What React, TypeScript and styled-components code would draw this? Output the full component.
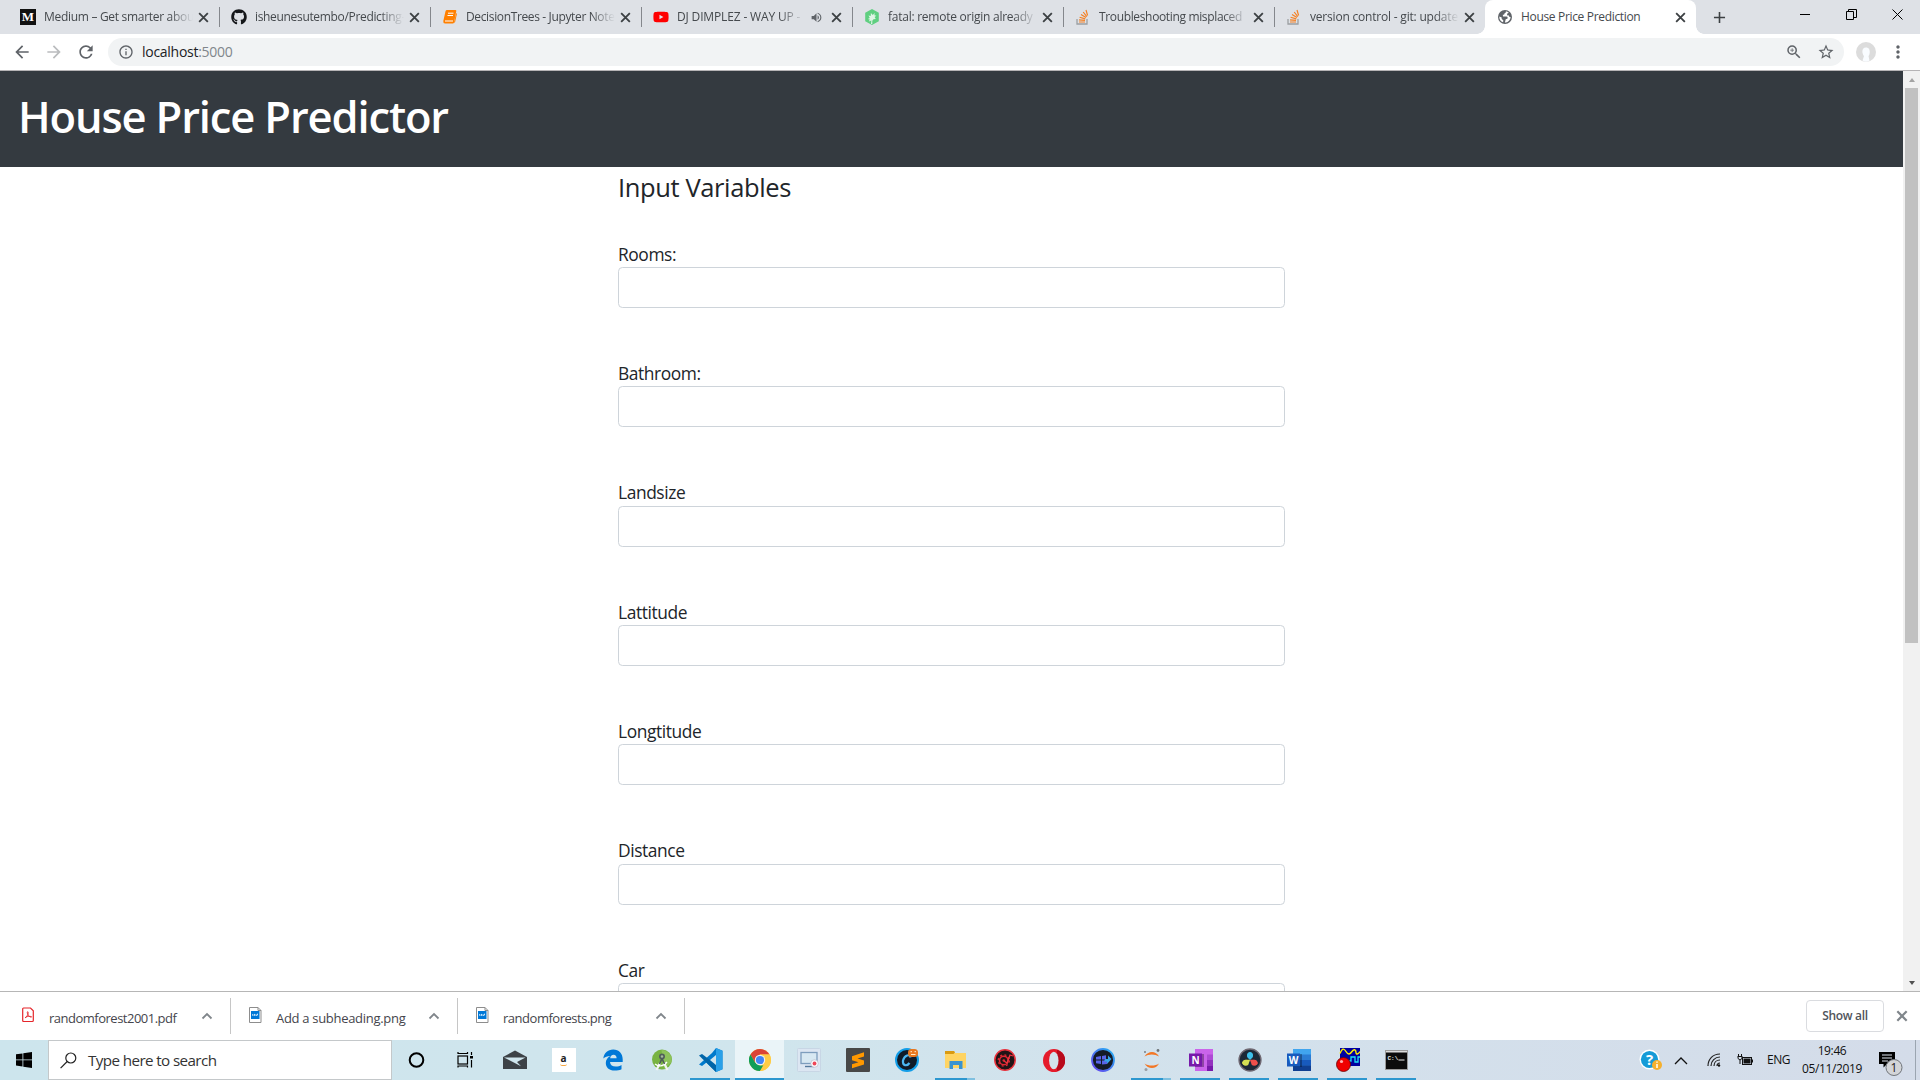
import React from "react";
import styled, { createGlobalStyle, css } from "styled-components";
import { FaGithub, FaYoutube } from "react-icons/fa";
import {
  MdArrowBack, MdArrowForward, MdRefresh, MdAdd, MdVolumeUp, MdInfoOutline,
  MdZoomIn, MdStarBorder, MdMoreVert,
} from "react-icons/md";

const Global = createGlobalStyle`
  * { box-sizing: border-box; }
  html, body { margin: 0; width: 1920px; height: 1080px; overflow: hidden; background: #fff; }
  body { font-family: "Open Sans", "Noto Sans", sans-serif; }
  svg { display: block; flex: none; }
`;

const Screen = styled.div`
  width: 1920px; height: 1080px; display: flex; flex-direction: column; overflow: hidden;
`;

/* tab strip */
const TabStrip = styled.div`
  height: 34px; flex: none; display: flex; background: #dee1e6; padding-left: 8px;
`;
const TabBox = styled.div<{ $active?: boolean; $sep?: boolean }>`
  width: 211px; height: 34px; flex: none; display: flex; align-items: center; padding: 0 9px 0 12px; position: relative;
  ${(p) => p.$active && css`
    background: #fff; border-radius: 8px 8px 0 0;
    &::before, &::after { content: ""; position: absolute; bottom: 0; width: 8px; height: 8px; }
    &::before { left: -8px; background: radial-gradient(circle at 0 0, transparent 7.5px, #fff 8px); }
    &::after { right: -8px; background: radial-gradient(circle at 100% 0, transparent 7.5px, #fff 8px); }
  `}
  ${(p) => p.$sep && css`
    &::after { content: ""; position: absolute; right: -1px; top: 7px; width: 1px; height: 20px; background: #84878c; }
  `}
`;
const Favicon = styled.span`
  width: 16px; height: 16px; flex: none; display: flex; align-items: center; justify-content: center;
`;
const TabTitle = styled.span<{ $w?: number; $ls: number; $fade?: boolean }>`
  margin-left: 8px; width: ${(p) => p.$w || 148}px; flex: none; overflow: hidden; white-space: nowrap;
  font-size: 12px; line-height: 18px; color: #45494d; letter-spacing: ${(p) => p.$ls}px;
  ${(p) => p.$fade && css`mask-image: linear-gradient(90deg, #000 calc(100% - 24px), transparent);`}
`;
const AudioMark = styled.span`
  margin-left: 6px; display: flex; color: #5f6368;
`;
const TabClose = styled.span`
  margin-left: auto; width: 13px; display: flex;
`;
const NewTab = styled.div`
  width: 46px; display: flex; align-items: center; justify-content: center; color: #3c4043;
`;
const WindowButtons = styled.div`
  margin-left: auto; display: flex; height: 28px;
`;
const WinButton = styled.div`
  width: 46px; display: flex; align-items: center; justify-content: center;
`;

/* toolbar */
const Toolbar = styled.div`
  height: 37px; flex: none; display: flex; align-items: center; background: #fff; border-bottom: 1px solid #b6b4b6;
  padding-left: 12px; color: #5f6368;
`;
const NavButton = styled.span<{ $dim?: boolean }>`
  width: 32px; display: flex; color: ${(p) => (p.$dim ? "#babcbe" : "#5f6368")};
`;
const Omnibox = styled.div`
  width: 1736px; height: 28px; border-radius: 14px; background: #f1f3f4; display: flex; align-items: center; padding: 0 9px 0 10px;
`;
const Url = styled.span`
  margin: -1px 0 0 8px; font-size: 14px; color: #202124; letter-spacing: -0.28px; span { color: #80868b; }
`;
const OmniIcons = styled.span`
  margin-left: auto; display: flex; gap: 14px;
`;
const Avatar = styled.span`
  margin-left: 12px; display: flex;
`;
const Menu = styled.span`
  margin-left: 12px; display: flex;
`;

/* page */
const Viewport = styled.div`
  height: 920px; flex: none; display: flex; overflow: hidden;
`;
const Page = styled.main`
  width: 1903px; height: 920px; overflow: hidden; background: #fff;
`;
const Header = styled.header`
  height: 96px; background: #343a40; padding: 16px 18px 0;
`;
const Title = styled.h1`
  margin: 0; color: #fff; font-size: 43.5px; line-height: 60px; font-weight: 600; white-space: nowrap; letter-spacing: -1.14px;
`;
const Form = styled.form`
  width: 667px; margin-left: 618px; color: #212529;
`;
const Legend = styled.h2`
  margin: 0; font-size: 25.5px; line-height: 32px; padding-top: 4px; height: 73.7px; font-weight: 400; white-space: nowrap; letter-spacing: -0.38px;
`;
const Field = styled.div`
  height: 119.33px;
`;
const Label = styled.label`
  display: block; height: 26.3px; line-height: 26.7px; font-size: 17.4px; white-space: nowrap; letter-spacing: -0.42px;
`;
const Input = styled.input`
  display: block; width: 667px; height: 41px; border: 1px solid #ced4da; border-radius: 4.4px; background: #fff; outline: none;
`;
const Scrollbar = styled.div`
  width: 17px; height: 920px; background: #f1f1f1; display: flex; flex-direction: column; align-items: center;
`;
const Arrow = styled.div<{ $down?: boolean }>`
  height: 17px; display: flex; align-items: center;
  &::before {
    content: ""; border: 4px solid transparent; border-width: 0 3.5px 4px; border-bottom-color: #a3a3a3;
    ${(p) => p.$down && css`border-width: 4px 3.5px 0; border-top-color: #505050;`}
  }
`;
const Thumb = styled.div`
  width: 13px; height: 555px; margin-bottom: auto; background: #c1c1c1;
`;

/* download shelf */
const Shelf = styled.div`
  height: 49px; flex: none; display: flex; align-items: center; background: #fff; border-top: 1px solid #b6b6b6; padding-right: 11px;
`;
const Download = styled.div<{ $w: number; $pad: number }>`
  width: ${(p) => p.$w}px; height: 36px; display: flex; align-items: flex-start; padding-left: ${(p) => p.$pad}px; padding-right: 17px;
  border-right: 1px solid #c6c6c6;
  > svg:first-child { margin-top: 9px; }
  > svg:last-child { margin: 14px 0 0 auto; }
`;
const FileName = styled.span<{ $ls: number; $gap: number }>`
  margin: 10px 0 0 ${(p) => p.$gap}px; font-size: 13px; line-height: 20px; color: #45454c; letter-spacing: ${(p) => p.$ls}px; white-space: nowrap;
`;
const ShowAll = styled.button`
  margin: 0 11px 0 auto; width: 78px; height: 32px; border: 1px solid #dadce0; border-radius: 4px; background: #fff; padding: 0 0 2px;
  font: 600 12px "Open Sans", sans-serif; color: #50545a; letter-spacing: -0.3px;
`;

/* taskbar */
const Taskbar = styled.div`
  height: 40px; flex: none; display: flex; background: linear-gradient(90deg, #cde5ed 0, #d0e5ed 40%, #d3e1ec 65%, #d4dce9 100%);
`;
const Start = styled.div`
  width: 48px; display: flex; align-items: center; justify-content: center;
`;
const Search = styled.div`
  width: 344px; height: 40px; background: #fff; border: 1px solid #c4c8ca; display: flex; align-items: center; padding-left: 11px;
  font-size: 15.2px; color: #333; letter-spacing: -0.6px; gap: 11px;
`;
const TaskButton = styled.div<{ $run?: boolean; $active?: boolean; $multi?: boolean }>`
  width: 49px; height: 40px; flex: none; display: flex; align-items: center; justify-content: center; position: relative;
  ${(p) => p.$active && css`background: #eaf4f8;`}
  ${(p) => p.$run && css`
    &::after {
      content: ""; position: absolute; bottom: 0; height: 2px; background: #2d97cf;
      left: ${p.$active ? 0 : 4}px; right: ${p.$active ? 0 : 5}px;
      ${p.$multi && "background: linear-gradient(90deg, #2d97cf 32px, #7fc0e0 32px);"}
    }
  `}
`;
const Tray = styled.div`
  margin-left: auto; display: flex; align-items: center; height: 40px; color: #111; font-size: 12px; white-space: nowrap;
`;
const TrayIcon = styled.span<{ $gap: number }>`
  margin-left: ${(p) => p.$gap}px; display: flex;
`;
const Lang = styled.span`
  margin: -1px 0 0 13px; width: 24px; letter-spacing: -0.5px;
`;
const Clock = styled.div`
  margin-left: 6px; width: 70px; text-align: center; line-height: 18px; letter-spacing: -0.38px;
`;
const Notice = styled.div`
  margin-left: 11px; width: 37px; height: 40px; padding-top: 10px;
`;
const PeekStrip = styled.div`
  width: 5px; height: 40px; border-left: 1px solid #9ba5b0;
`;

const Cross = ({ size, color, w }: { size: number; color: string; w: number }) => (
  <svg width={size} height={size} viewBox="0 0 12 12"><path d="M2 2l8 8M10 2l-8 8" stroke={color} strokeWidth={w} /></svg>
);
const GlobeIcon = () => (
  <svg width="16" height="16" viewBox="0 0 16 16">
    <circle cx="8" cy="8" r="7" fill="#5f6368" />
    <path d="M8.800 2.200c.5 1-.3 1.700-1.300 2 .2 1.300-.6 1.500-1.700 1.500l.2 1.800h3.500c1.500 0 1.300 1.600.8 2.300l-1.600.5-.8 3.200c2.800 0 5.500-2 5.700-5.500-.8.300-1.500-.3-1.700-1.500L10 6.200l.3-1.700 1.500-.8C11 2.800 9.800 2.300 8.800 2.200zM2.300 7.500c-.2 3 1.500 5 3.800 5.800l.2-2-1.600-1.400V8.600z" fill="#fff" />
  </svg>
);
const TeamTreeIcon = () => (
  <svg width="16" height="16" viewBox="0 0 16 16">
    <path d="M8 0l6.800 3.800v8.400L8 16l-6.800-3.800V3.800z" fill="#5fcf80" />
    <path d="M7 15l.4-3.600-2.600 1 1-2-2-.5 2-1L4.500 6.500l2.200.6.200-3L8.800 6l1.900-2-.3 2.300 2 .5-1.800 1.200 1.200 2-2.300.2-1.200 1.500V15z" fill="#dff5e5" />
  </svg>
);
const BookIcon = () => (
  <svg width="16" height="16" viewBox="0 0 16 16">
    <path d="M5 1h8.500q1 0 .8 1L12 13.500q-.2 1-1.200 1H3Q1 14.500 1.300 12L3.500 2.200Q3.800 1 5 1z" fill="#ff8000" />
    <path d="M6 4.200h5.500M5.500 6.500H11M3 12h8" stroke="#fff" strokeWidth="1" fill="none" />
    <path d="M14.500 4.500l-2 9" stroke="#ff8000" fill="none" />
  </svg>
);
const MediumIcon = () => (
  <svg width="16" height="16" viewBox="0 0 16 16">
    <rect width="16" height="16" fill="#111" />
    <text x="8" y="12.300" textAnchor="middle" fill="#fff" fontFamily="Liberation Serif" fontWeight="700" fontSize="13">M</text>
  </svg>
);
const StackIcon = () => (
  <svg width="16" height="16" viewBox="0 0 16 16" fill="none">
    <path d="M2 10v5h10v-5" stroke="#9c9fa2" strokeWidth="1.300" />
    <path d="M4 13h6M4 10.800l6 .6M4.600 8.200l5.700 1.700M6 5.400l5 3.200M8.200 3l3.600 4.600M11 1l1.600 5.500" stroke="#f48024" strokeWidth="1.200" />
  </svg>
);

const tabs: { title: string; ls: number; icon: React.ReactNode; audio?: boolean; active?: boolean }[] = [
  { title: "Medium – Get smarter abou", ls: -0.3, icon: <MediumIcon /> },
  { title: "isheunesutembo/Predicting-", ls: -0.33, icon: <FaGithub size={16} color="#15171a" /> },
  { title: "DecisionTrees - Jupyter Note", ls: -0.36, icon: <BookIcon /> },
  { title: "DJ DIMPLEZ - WAY UP -", ls: -0.15, icon: <FaYoutube size={16} color="#f00" />, audio: true },
  { title: "fatal: remote origin already", ls: -0.25, icon: <TeamTreeIcon /> },
  { title: "Troubleshooting misplaced", ls: -0.35, icon: <StackIcon /> },
  { title: "version control - git: update", ls: -0.2, icon: <StackIcon /> },
  { title: "House Price Prediction", ls: -0.33, icon: <GlobeIcon />, active: true },
];

const PdfIcon = () => (
  <svg width="12" height="16" viewBox="0 0 12 16" fill="none" stroke="#e5252a">
    <path d="M1.500 1h7L11.300 3.800v9.700q0 1-1 1H1.700q-1 0-1-1V2q0-1 .8-1z" strokeWidth="1.200" />
    <path d="M3 11c3-2 3.500-5 3-6s-1.200.3-.3 2.200S8.500 10.500 9.500 10 6 8.700 3.500 10.300" strokeWidth=".9" />
  </svg>
);
const PngIcon = () => (
  <svg width="13" height="16" viewBox="0 0 13 16">
    <path d="M.5.500h8.500l3 3v12H.500z" fill="#fff" stroke="#8d8d8d" />
    <path d="M9 .5v3h3" fill="none" stroke="#8d8d8d" />
    <rect x="2" y="4" width="8.500" height="8" fill="#0078d7" />
    <path d="M3 8.700V6.800l1.300 1.200L5.500 6.800 7 8l2-1.700V8L7.500 9l-1-.8-1 .7-1-.6z" fill="#d0eafc" />
  </svg>
);
const ChevronUp = () => (
  <svg width="12" height="8" viewBox="0 0 12 8"><path d="M1.500 6.500L6 2l4.500 4.500" fill="none" stroke="#80868b" strokeWidth="1.800" /></svg>
);

const CortanaIcon = () => <svg width="18" height="18"><circle cx="8.500" cy="9" r="6.800" fill="none" stroke="#000" strokeWidth="2" /></svg>;
const TaskViewIcon = () => (
  <svg width="18" height="18" viewBox="0 0 18 18" fill="none" stroke="#000">
    <rect x="1" y="5" width="9.500" height="8" strokeWidth="1.200" />
    <path d="M1 1v1.500h9.500V1M1 16.500V15h9.500v1.500M14.500 1v3M14.500 9v7.500" strokeWidth="1.200" />
    <rect x="13" y="5" width="3" height="2.500" fill="#000" stroke="none" />
  </svg>
);
const MailIcon = () => (
  <svg width="24" height="20" viewBox="0 0 24 20">
    <path d="M0 7L12 .5 24 7v12H0z" fill="#3d4247" /><path d="M1 7.500h21.500l-8.500 4.500 4 4.300z" fill="#d0e6ee" />
  </svg>
);
const AmazonTile = styled.span`
  width: 24px; height: 24px; background: #fff; display: flex; flex-direction: column; align-items: center; justify-content: center;
  font: 700 10px/8px "Open Sans", sans-serif; color: #222;
  &::after { content: ""; width: 7px; height: 3px; border-bottom: 1px solid #f7a842; border-radius: 0 0 50% 50%; }
`;
const EdgeIcon = () => (
  <svg width="20" height="22" viewBox="0 0 20 22">
    <path d="M.3 9.500C1 4 4.800.5 10.200.5 16 .5 19.700 4.600 19.700 10.300V13H7c.2 3 2.400 4.500 5.700 4.500 2.200 0 4.200-.5 5.800-1.500v4.200c-2 1-4.200 1.400-6.700 1.400-6 0-9-3.200-9-7.600 0-3 1.700-5.600 4.500-7C4.300 7.300 2 7.900.3 9.500zM7.200 9.300h6.400c0-2.300-1.100-3.500-3-3.500-2 0-3.200 1.300-3.400 3.500z" fill="#0078d7" />
  </svg>
);
const AndroidStudioIcon = () => (
  <svg width="22" height="22" viewBox="0 0 22 22">
    <circle cx="11" cy="10.500" r="10" fill="#78b342" />
    <path d="M10.500 1A10 10 0 0 1 20.500 13L13 20z" fill="#8dc25a" />
    <circle cx="11" cy="7.500" r="3" fill="#52605a" /><circle cx="11" cy="7.500" r="1.200" fill="#a6ba9d" />
    <path d="M9 14L5.500 21M13 14l3.500 7" stroke="#f3f3f3" strokeWidth="2.200" /><path d="M4 15c3 2.500 8 3 12-2" stroke="#fff" strokeWidth="1.300" fill="none" />
    <path d="M11 9.500L8.500 15M11 9.500l2.500 5.500" stroke="#4d5a58" strokeWidth="1.600" />
  </svg>
);
const CodeIcon = () => (
  <svg width="24" height="24" viewBox="0 0 24 24">
    <path d="M17 0l6.500 2.800v18.400L17 24 7.500 14.500 3 18 0 16.500 13 5z" fill="#007acc" />
    <path d="M0 7.500L3 6l14 10.500V24l-6.500-6.300z" fill="#0065a9" />
    <path d="M17 0l6.500 2.800v18.400L17 24z" fill="#29a0e8" /><path d="M17 7v10l-6-5z" fill="#d0e5ed" /><path d="M0 10.500L2.500 12 0 14.200z" fill="#d0e5ed" />
  </svg>
);
const ChromeIcon = () => (
  <svg width="22" height="22" viewBox="0 0 22 22">
    <circle cx="11" cy="11" r="11" fill="#fc4" />
    <path d="M1.470 5.500A11 11 0 0 1 20.500 5.500H11L6.240 13.750z" fill="#db4437" />
    <path d="M1.470 5.500L6.240 13.750 11 16.500h4.500L11 22A11 11 0 0 1 1.470 5.500z" fill="#0f9d58" />
    <path d="M15.760 13.750L11 22a11 11 0 0 0 9.500-16.500H11z" fill="#fc4" />
    <circle cx="11" cy="11" r="5.200" fill="#f1f1f1" /><circle cx="11" cy="11" r="4.100" fill="#4285f4" />
  </svg>
);
const RecorderIcon = () => (
  <svg width="24" height="24" viewBox="0 0 24 24">
    <rect x=".5" y=".5" width="23" height="23" rx="1" fill="#dce6f2" stroke="#c8d6e5" />
    <rect x="4" y="4.500" width="16" height="11" fill="#d7e8f2" stroke="#7d9dbd" strokeWidth="1.300" />
    <path d="M8 18.500h9" stroke="#55799d" strokeWidth="1.400" /><circle cx="17.500" cy="15.500" r="3.800" fill="#f7f7fa" stroke="#aab" strokeWidth=".5" /><circle cx="17.500" cy="15.500" r="1.900" fill="#ef4657" />
  </svg>
);
const SublimeIcon = () => (
  <svg width="24" height="24" viewBox="0 0 24 24">
    <rect width="24" height="24" rx="1" fill="#484848" />
    <path d="M6 8.200L18 4.200v4.300L11.500 10.500 18 12.600v4L6 20.300v-4l6.500-2.100L6 12.200z" fill="#ff9800" />
  </svg>
);
const CIcon = () => (
  <svg width="24" height="24" viewBox="0 0 24 24">
    <circle cx="12" cy="12" r="11" fill="#101b28" stroke="#139ee8" strokeWidth="2" />
    <path d="M15.500 9.500C15 5.500 9.500 7 8 12.500 7.200 18 12 18.500 14.500 15" fill="none" stroke="#4db7f2" strokeWidth="2.200" />
    <rect x="13" y="1" width="10" height="8" rx="3.500" fill="#e87820" /><path d="M15.500 3.700h1.500M19.500 3.700H21M16 6.500h4.500" stroke="#fff0d0" />
  </svg>
);
const FolderIcon = () => (
  <svg width="22" height="20" viewBox="0 0 22 20">
    <path d="M0 1h9l1 2h11v15H0z" fill="#ffd463" /><path d="M0 1h9l1 1.500L8.500 4H0z" fill="#d99a12" />
    <path d="M4.500 19v-8h13v8H14v-4H8v4z" fill="#3a93d0" />
  </svg>
);
const RedGearIcon = () => (
  <svg width="22" height="22" viewBox="0 0 22 22">
    <circle cx="11" cy="11" r="10.200" fill="#211416" stroke="#e8323c" strokeWidth="1.500" />
    <circle cx="9.800" cy="11.500" r="4.300" fill="none" stroke="#e02833" strokeWidth="1.600" /><circle cx="9.800" cy="11.500" r="5.600" fill="none" stroke="#e02833" strokeWidth="1.300" strokeDasharray="2 2.400" />
    <path d="M10 12l3 2 3-8 3 1" fill="none" stroke="#ef3742" strokeWidth="1.300" /><circle cx="9.800" cy="11.500" r="1.300" fill="#e02833" />
  </svg>
);
const OperaIcon = () => (
  <svg width="22" height="23" viewBox="0 0 22 23">
    <ellipse cx="11" cy="11.500" rx="11" ry="11.500" fill="#e51b2b" /><path d="M14 1c11 3 11 18 0 21z" fill="#b80a1c" /><ellipse cx="10.800" cy="11.500" rx="4.700" ry="8.800" fill="#d3e3ed" />
  </svg>
);
const BlueWinIcon = () => (
  <svg width="24" height="24" viewBox="0 0 24 24">
    <defs><linearGradient id="bw" x1="0" y1="1" x2="1" y2="0"><stop offset="0" stopColor="#6840ee" /><stop offset="1" stopColor="#22b4f4" /></linearGradient></defs>
    <circle cx="12" cy="12" r="11" fill="#141b28" stroke="url(#bw)" strokeWidth="1.800" />
    <path d="M5 9l5-1v3.500H5zM11 8l4-.8v4.300h-4zM5 12.500h5V16l-5-.7zM11 12.500h5V16l-5 .5z" fill="#5863e8" /><path d="M14 11h3V7.500l3.500 3.500-4.500 5v-2.500h-3z" fill="#35a5e9" />
  </svg>
);
const JupyterIcon = () => (
  <svg width="18" height="24" viewBox="0 0 18 24">
    <path d="M1.500 8.500C5 2.500 13 2.500 16 8.500 12 5.800 5.500 5.800 1.500 8.500zM1.500 15.500c3.500 6 11.500 6 14.500 0-4 2.700-10.500 2.700-14.500 0z" fill="#f37726" />
    <circle cx="15" cy="2.500" r="1.400" fill="#717579" /><circle cx="2" cy="4" r=".9" fill="#717579" /><circle cx="3" cy="21.500" r="1.500" fill="#999ea3" />
  </svg>
);
const OfficeIcon = ({ letter }: { letter: string }) => {
  const n = letter === "N";
  return (
    <svg width="24" height="22" viewBox="0 0 24 22">
      <rect x="6" width="18" height="22" fill={n ? "#ca64ea" : "#2b7cd3"} />
      {n ? <path d="M18 5.500h6v5.500h-6z" fill="#ae4bd5" /> : <path d="M6 0h18v5.500H6z" fill="#41a5ee" />}
      {n ? <path d="M18 11h6v5.500h-6z" fill="#9332bf" /> : <path d="M6 11h18v5.500H6z" fill="#185abd" />}
      {n ? <path d="M18 16.500h6V22h-6z" fill="#7719aa" /> : <path d="M6 16.500h18V22H6z" fill="#103f91" />}
      <path d="M6 5h9v13H6z" fill="#000" opacity=".3" />
      <rect y="4.500" width="13" height="13" fill={n ? "#7719aa" : "#185abd"} />
      <text x="6.500" y="14.800" textAnchor="middle" fill="#fff" fontFamily="Open Sans" fontWeight="700" fontSize="10">{letter}</text>
    </svg>
  );
};
const ResolveIcon = () => (
  <svg width="24" height="24" viewBox="0 0 24 24">
    <circle cx="12" cy="12" r="11" fill="#1c2837" stroke="#6f6872" strokeWidth="1.300" />
    <path d="M12 12C8 9 9 4 12 4s4 5 0 8z" fill="#3ebfea" /><path d="M12 12c-1 5-5.500 6.500-7.500 4S7 11 12 12z" fill="#d9e34c" /><path d="M12 12c5-1 9 1.500 7.500 4s-6.500 1-7.500-4z" fill="#ef4f4b" />
    <circle cx="12" cy="7.500" r="3" fill="#3ebfea" /><circle cx="7.800" cy="14.800" r="3" fill="#d4df54" /><circle cx="16.200" cy="14.800" r="3" fill="#ef4f4b" />
  </svg>
);
const ScopeIcon = () => (
  <svg width="24" height="24" viewBox="0 0 24 24">
    <rect x="4" width="20" height="18" fill="#0000a0" />
    <path d="M4 5.500C6 0 8 0 10 3.500s4 3 6 0 4-2 4 1 3 1 4-1" fill="none" stroke="#ffef00" strokeWidth="1.400" />
    <path d="M12 13h3V9h4v5h3V9h2" fill="none" stroke="#20dff0" strokeWidth="1.300" />
    <circle cx="7.500" cy="16.500" r="7" fill="#f00000" stroke="#6a0000" strokeWidth=".8" /><circle cx="5.500" cy="13.500" r="1.600" fill="#ffb0b0" />
  </svg>
);
const CmdIcon = () => (
  <svg width="23" height="20" viewBox="0 0 23 20">
    <rect x=".5" y=".5" width="22" height="19" fill="#0c0c0c" stroke="#999" /><path d="M1 1h21v1.500H1z" fill="#ddd" />
    <text x="2.500" y="9.800" fill="#eee" fontFamily="Liberation Mono" fontWeight="700" fontSize="6">C:\</text><path d="M13.500 10h6" stroke="#eee" />
  </svg>
);

const apps: { icon: React.ReactNode; run?: boolean; active?: boolean; multi?: boolean }[] = [
  { icon: <CortanaIcon /> }, { icon: <TaskViewIcon /> }, { icon: <MailIcon /> }, { icon: <AmazonTile>a</AmazonTile> },
  { icon: <EdgeIcon /> }, { icon: <AndroidStudioIcon /> }, { icon: <CodeIcon />, run: true },
  { icon: <ChromeIcon />, run: true, active: true }, { icon: <RecorderIcon /> }, { icon: <SublimeIcon /> }, { icon: <CIcon /> },
  { icon: <FolderIcon />, run: true, multi: true }, { icon: <RedGearIcon /> }, { icon: <OperaIcon /> }, { icon: <BlueWinIcon /> },
  { icon: <JupyterIcon />, run: true, multi: true }, { icon: <OfficeIcon letter="N" />, run: true }, { icon: <ResolveIcon />, run: true },
  { icon: <OfficeIcon letter="W" />, run: true }, { icon: <ScopeIcon />, run: true }, { icon: <CmdIcon />, run: true },
];

const fields = ["Rooms:", "Bathroom:", "Landsize", "Lattitude", "Longtitude", "Distance", "Car"];

export default function App() {
  return (
    <Screen>
      <Global />
      <TabStrip>
        {tabs.map((t, i) => (
          <TabBox key={t.title} $active={t.active} $sep={i < 6}>
            <Favicon>{t.icon}</Favicon>
            <TabTitle $w={t.audio ? 127 : 149} $ls={t.ls} $fade={!t.active}>{t.title}</TabTitle>
            {t.audio && <AudioMark><MdVolumeUp size={13} /></AudioMark>}
            <TabClose><Cross size={13} color="#3c4043" w={1.7} /></TabClose>
          </TabBox>
        ))}
        <NewTab><MdAdd size={19} /></NewTab>
        <WindowButtons>
          <WinButton><svg width="11" height="11"><path d="M0 5.500h10" stroke="#000" /></svg></WinButton>
          <WinButton><svg width="11" height="11"><path d="M.5 2.500h7v8h-7zM2.500 2.500v-2h8v8h-3" fill="none" stroke="#000" /></svg></WinButton>
          <WinButton><svg width="11" height="11"><path d="M.5.500l10 10M10.500.500l-10 10" stroke="#000" /></svg></WinButton>
        </WindowButtons>
      </TabStrip>
      <Toolbar>
        <NavButton><MdArrowBack size={20} /></NavButton>
        <NavButton $dim><MdArrowForward size={20} /></NavButton>
        <NavButton><MdRefresh size={20} /></NavButton>
        <Omnibox>
          <MdInfoOutline size={16} />
          <Url>localhost<span>:5000</span></Url>
          <OmniIcons><MdZoomIn size={18} /><MdStarBorder size={18} /></OmniIcons>
        </Omnibox>
        <Avatar>
          <svg width="20" height="20"><circle cx="10" cy="10" r="10" fill="#dcdcdc" /><path d="M10 5.500c-5 0-4 7-2 8.500L6.500 18.500Q10 21 13.500 18.500L12.500 14c1.500-1.500 2.500-8.500-2.500-8.500z" fill="#f9fcff" /></svg>
        </Avatar>
        <Menu><MdMoreVert size={20} /></Menu>
      </Toolbar>
      <Viewport>
        <Page>
          <Header><Title>House Price Predictor</Title></Header>
          <Form>
            <Legend>Input Variables</Legend>
            {fields.map((f) => (
              <Field key={f}><Label>{f}</Label><Input aria-label={f} /></Field>
            ))}
          </Form>
        </Page>
        <Scrollbar><Arrow /><Thumb /><Arrow $down /></Scrollbar>
      </Viewport>
      <Shelf>
        <Download $w={231} $pad={22}><PdfIcon /><FileName $gap={15} $ls={-0.5}>randomforest2001.pdf</FileName><ChevronUp /></Download>
        <Download $w={227} $pad={18}><PngIcon /><FileName $gap={14} $ls={-0.3}>Add a subheading.png</FileName><ChevronUp /></Download>
        <Download $w={227} $pad={18}><PngIcon /><FileName $gap={14} $ls={-0.48}>randomforests.png</FileName><ChevronUp /></Download>
        <ShowAll>Show all</ShowAll>
        <Cross size={14} color="#80868b" w={1.9} />
      </Shelf>
      <Taskbar>
        <Start><svg width="16" height="16" viewBox="0 0 16 16"><path d="M0 2.300L6.500 1.400v6.100H0zM7.300 1.300L16 0v7.500H7.300zM0 8.300h6.500v6.200L0 13.600zM7.300 8.300H16V16l-8.700-1.300z" /></svg></Start>
        <Search>
          <svg width="17" height="17" viewBox="0 0 17 17" fill="none" stroke="#222" strokeWidth="1.200"><circle cx="10.800" cy="6" r="5" /><path d="M7.200 9.500L.6 16.200" /></svg>
          Type here to search
        </Search>
        {apps.map((a, i) => (
          <TaskButton key={i} $run={a.run} $active={a.active} $multi={a.multi}>{a.icon}</TaskButton>
        ))}
        <Tray>
          <svg width="24" height="22" viewBox="0 0 24 22">
            <circle cx="10.500" cy="10.500" r="10" fill="#fff" /><circle cx="10.500" cy="10.500" r="8.600" fill="#159bd7" />
            <text x="10.500" y="16" textAnchor="middle" fill="#fff" fontFamily="Open Sans" fontWeight="700" fontSize="15">?</text>
            <circle cx="18" cy="16" r="5" fill="#f5b02e" /><path d="M18 15v4M18 12.500v1.300" stroke="#fff" strokeWidth="1.500" />
          </svg>
          <TrayIcon $gap={11}>
            <svg width="14" height="9" viewBox="0 0 14 9"><path d="M1 8l6-6 6 6" fill="none" stroke="#111" strokeWidth="1.300" /></svg>
          </TrayIcon>
          <TrayIcon $gap={19}>
            <svg width="14" height="14" viewBox="0 0 14 14" fill="none" stroke="#222" strokeWidth="1.200">
              <path d="M1 13C1 6 6 1 13 1M4 13c0-5 4-9 9-9M7 13c0-3.500 2.500-6 6-6M10 13c0-2 1-3 3-3" /><circle cx="12" cy="12.500" r="1.200" fill="#111" stroke="none" />
            </svg>
          </TrayIcon>
          <TrayIcon $gap={16}>
            <svg width="17" height="12" viewBox="0 0 17 12" fill="none" stroke="#111">
              <rect x="5.500" y="3.500" width="9" height="7" /><rect x="7" y="5" width="6" height="4" fill="#111" /><path d="M15.500 5.500v3M1.500 0v2M4.500 0v2M.5 2.500h5M1 3v1.500L3 6l2-1.500V3M3 6v4" />
            </svg>
          </TrayIcon>
          <Lang>ENG</Lang>
          <Clock>19:46<br />05/11/2019</Clock>
          <Notice>
            <svg width="26" height="26" viewBox="0 0 26 26">
              <path d="M1 2h16v12H9l-3.500 3.500V14H1z" fill="#000" /><path d="M4 5h10M4 8h10M4 11h6" stroke="#dde4ee" />
              <circle cx="16" cy="17.500" r="8" fill="#d3d5d8" stroke="#6f747a" />
              <text x="16" y="21.800" textAnchor="middle" fill="#222" fontFamily="Open Sans" fontSize="12">1</text>
            </svg>
          </Notice>
          <PeekStrip />
        </Tray>
      </Taskbar>
    </Screen>
  );
}
